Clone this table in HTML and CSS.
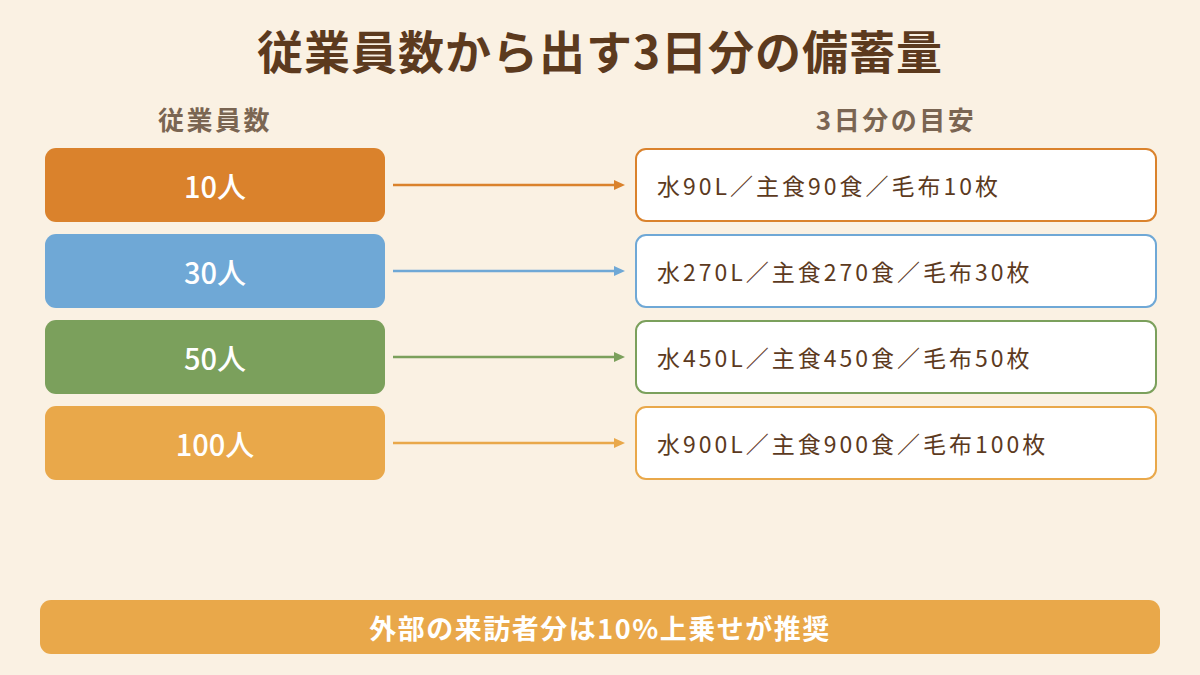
FILE: index.html
```html
<!DOCTYPE html>
<html lang="ja">
<head>
<meta charset="utf-8">
<link rel="stylesheet" href="styles.css">
</head>
<body>
<div class="page">
  <h1 class="title">従業員数から出す3日分の備蓄量</h1>
  <div class="headers">
    <div class="head head-left">従業員数</div>
    <div class="head-gap"></div>
    <div class="head head-right">3日分の目安</div>
  </div>
  <div class="rows">
    <div class="row c1">
      <div class="count">10人</div>
      <svg class="arrow" width="250" height="20" viewBox="0 0 250 20"><line x1="8" y1="10" x2="232" y2="10" stroke-width="2.5"/><polygon points="229,5 240,10 229,15"/></svg>
      <div class="supply">水90L／主食90食／毛布10枚</div>
    </div>
    <div class="row c2">
      <div class="count">30人</div>
      <svg class="arrow" width="250" height="20" viewBox="0 0 250 20"><line x1="8" y1="10" x2="232" y2="10" stroke-width="2.5"/><polygon points="229,5 240,10 229,15"/></svg>
      <div class="supply">水270L／主食270食／毛布30枚</div>
    </div>
    <div class="row c3">
      <div class="count">50人</div>
      <svg class="arrow" width="250" height="20" viewBox="0 0 250 20"><line x1="8" y1="10" x2="232" y2="10" stroke-width="2.5"/><polygon points="229,5 240,10 229,15"/></svg>
      <div class="supply">水450L／主食450食／毛布50枚</div>
    </div>
    <div class="row c4">
      <div class="count">100人</div>
      <svg class="arrow" width="250" height="20" viewBox="0 0 250 20"><line x1="8" y1="10" x2="232" y2="10" stroke-width="2.5"/><polygon points="229,5 240,10 229,15"/></svg>
      <div class="supply">水900L／主食900食／毛布100枚</div>
    </div>
  </div>
  <div class="note">外部の来訪者分は10%上乗せが推奨</div>
</div>
</body>
</html>
```

FILE: styles.css
```css
* { box-sizing: border-box; }
html, body { margin: 0; padding: 0; }
body {
  background: #FAF1E3;
  font-family: "Noto Sans CJK JP", "Noto Sans", sans-serif;
  width: 1200px;
  height: 675px;
  overflow: hidden;
}
.page {
  height: 675px;
  display: flex;
  flex-direction: column;
  padding: 0 40px 21px 40px;
}
.title {
  margin: 21px 0 0 0;
  text-align: center;
  font-size: 46px;
  line-height: 56px;
  font-weight: 700;
  color: #5C3A1E;
  letter-spacing: 1px;
}
.headers {
  display: flex;
  margin: 22px 3px 0 5px;
  height: 38px;
  align-items: center;
}
.head {
  font-size: 26px;
  font-weight: 700;
  color: #7A6552;
  text-align: center;
  letter-spacing: 2.5px;
}
.head-left { width: 340px; }
.head-gap { width: 250px; }
.head-right { width: 522px; }
.rows {
  display: flex;
  flex-direction: column;
  gap: 12px;
  margin: 11px 3px 0 5px;
}
.row {
  display: flex;
  align-items: center;
  height: 74px;
}
.count {
  width: 340px;
  height: 74px;
  border-radius: 11px;
  display: flex;
  align-items: center;
  justify-content: center;
  color: #fff;
  font-size: 29px;
  font-weight: 500;
}
.arrow { display: block; flex: none; }
.supply {
  width: 522px;
  height: 74px;
  border-radius: 11px;
  background: #fff;
  border: 2.5px solid;
  display: flex;
  align-items: center;
  padding-left: 20px;
  font-size: 23px;
  color: #5C3A1E;
  letter-spacing: 3px;
}
.c1 .count { background: #DA822C; }
.c1 .supply { border-color: #DA822C; }
.c1 .arrow line { stroke: #DA822C; }
.c1 .arrow polygon { fill: #DA822C; }
.c2 .count { background: #6FA8D6; }
.c2 .supply { border-color: #6FA8D6; }
.c2 .arrow line { stroke: #6FA8D6; }
.c2 .arrow polygon { fill: #6FA8D6; }
.c3 .count { background: #7BA05C; }
.c3 .supply { border-color: #7BA05C; }
.c3 .arrow line { stroke: #7BA05C; }
.c3 .arrow polygon { fill: #7BA05C; }
.c4 .count { background: #E9A84A; }
.c4 .supply { border-color: #E9A84A; }
.c4 .arrow line { stroke: #E9A84A; }
.c4 .arrow polygon { fill: #E9A84A; }
.note {
  margin-top: auto;
  height: 54px;
  border-radius: 11px;
  background: #E9A84A;
  color: #fff;
  display: flex;
  align-items: center;
  justify-content: center;
  font-size: 27px;
  font-weight: 700;
  letter-spacing: 1.5px;
}
```
